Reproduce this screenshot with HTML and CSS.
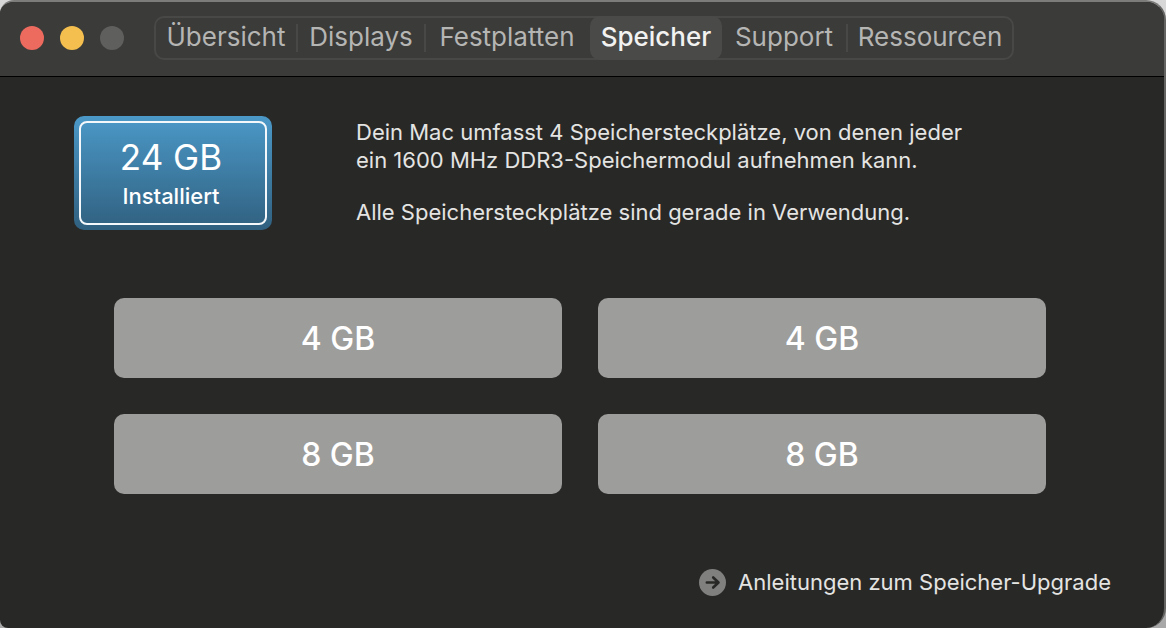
FILE: index.html
```html
<!DOCTYPE html>
<html lang="de">
<head>
<meta charset="utf-8">
<meta name="viewport" content="width=device-width, initial-scale=1">
<title>Speicher</title>
<link rel="stylesheet" href="styles.css">
</head>
<body>
<div class="window">
  <header class="titlebar">
    <div class="lights">
      <button class="light light-close" type="button" aria-label="Schließen"></button>
      <button class="light light-min" type="button" aria-label="Minimieren"></button>
      <button class="light light-zoom" type="button" aria-label="Zoomen" disabled></button>
    </div>
    <nav class="tabs">
      <button class="tab" type="button">Übersicht</button>
      <button class="tab" type="button">Displays</button>
      <button class="tab" type="button">Festplatten</button>
      <button class="tab tab-active" type="button" aria-current="page">Speicher</button>
      <button class="tab" type="button">Support</button>
      <button class="tab" type="button">Ressourcen</button>
    </nav>
  </header>
  <main class="content">
    <section class="summary">
      <div class="badge">
        <div class="badge-inner">
          <span class="badge-size">24 GB</span>
          <span class="badge-label">Installiert</span>
        </div>
      </div>
      <div class="info">
        <p>Dein Mac umfasst 4 Speichersteckplätze, von denen jeder<br>ein 1600 MHz DDR3-Speichermodul aufnehmen kann.</p>
        <p>Alle Speichersteckplätze sind gerade in Verwendung.</p>
      </div>
    </section>
    <section class="slots">
      <div class="slot">4 GB</div>
      <div class="slot">4 GB</div>
      <div class="slot">8 GB</div>
      <div class="slot">8 GB</div>
    </section>
    <footer class="footer">
      <a class="guide" href="#">
        <svg class="guide-icon" viewBox="0 0 27 27" aria-hidden="true">
          <circle cx="13.5" cy="13.5" r="13.5" fill="#80807f"/>
          <path d="M7.800 13.500H19M14.200 8.500l5.300 5-5.300 5" fill="none" stroke="#282826" stroke-width="2.600" stroke-linecap="round" stroke-linejoin="round"/>
        </svg>
        <span>Anleitungen zum Speicher-Upgrade</span>
      </a>
    </footer>
  </main>
</div>
</body>
</html>
```
FILE: styles.css
```css
* {
  box-sizing: border-box;
}

body {
  margin: 0;
  background: linear-gradient(#d8d8d8, #a8a8a8);
  font-family: Inter, "Liberation Sans", sans-serif;
  color: #e4e4e3;
}

.window {
  display: flex;
  flex-direction: column;
  min-height: 100vh;
  overflow: hidden;
  background: #282826;
  border-top: 2px solid #7c7c7b;
  border-right: 2px solid #646463;
  border-radius: 14px 20px 20px 8px;
}

.titlebar {
  display: flex;
  align-items: center;
  gap: 30px;
  height: 75px;
  padding: 0 20px 2px;
  background: #3b3b39;
  border-bottom: 1px solid #000;
}

.lights {
  display: flex;
  gap: 16px;
}

.light {
  width: 24px;
  height: 24px;
  padding: 0;
  border: 0;
  border-radius: 50%;
}

.light-close {
  background: #ed6a5f;
}

.light-min {
  background: #f5bf4f;
}

.light-zoom {
  background: #5f5f5e;
}

.tabs {
  display: grid;
  flex: 0 1 860px;
  grid-template-columns: 142fr 128fr 164fr 132fr 126fr 164fr;
  height: 44px;
  border: 2px solid #484847;
  border-radius: 10px;
}

.tab {
  padding: 0 2px 2px 0;
  border: 0;
  background: none;
  color: #b5b5b4;
  font: 400 26px/28px Inter, "Liberation Sans", sans-serif;
  text-align: center;
}

.tab:nth-child(1),
.tab:nth-child(2),
.tab:nth-child(5) {
  background: linear-gradient(#484847, #484847) right center / 2px 28px no-repeat;
}

.tab-active {
  margin: -2px 0;
  padding-right: 0;
  border-radius: 10px;
  background: #4a4a49;
  color: #f2f2f1;
  font-weight: 500;
}

.tab:last-child {
  padding-right: 0;
}

.content {
  display: flex;
  flex: 1;
  flex-direction: column;
  padding: 39px 53px 30px 74px;
}

.summary {
  display: flex;
  align-items: flex-start;
  gap: 84px;
}

.badge {
  flex: none;
  width: 198px;
  height: 114px;
  padding: 5px;
  border-radius: 10px;
  background: linear-gradient(#4b99c8, #30607f);
}

.badge-inner {
  display: flex;
  flex-direction: column;
  align-items: center;
  height: 100%;
  padding: 14px 4px 0 0;
  border: 2px solid #f4f8fa;
  border-radius: 8px;
  color: #fff;
}

.badge-size {
  font-size: 35px;
  line-height: 40px;
}

.badge-label {
  font-size: 22px;
  font-weight: 500;
  line-height: 38px;
}

.info {
  padding-top: 2px;
  font-size: 22px;
  line-height: 28px;
}

.info p {
  margin: 0;
}

.info p + p {
  margin-top: 24px;
}

.slots {
  display: grid;
  grid-template-columns: 1fr 1fr;
  gap: 36px;
  margin: 68px 65px 0 40px;
}

.slot {
  display: flex;
  align-items: center;
  justify-content: center;
  height: 80px;
  border-radius: 10px;
  background: #9d9d9b;
  color: #fff;
  font-size: 32px;
  font-weight: 500;
}

.footer {
  display: flex;
  justify-content: flex-end;
  margin-top: auto;
}

.guide {
  display: flex;
  align-items: center;
  gap: 12px;
  color: #e4e4e3;
  font-size: 22px;
  line-height: 32px;
  text-decoration: none;
}

.guide-icon {
  width: 27px;
  height: 27px;
}
```
